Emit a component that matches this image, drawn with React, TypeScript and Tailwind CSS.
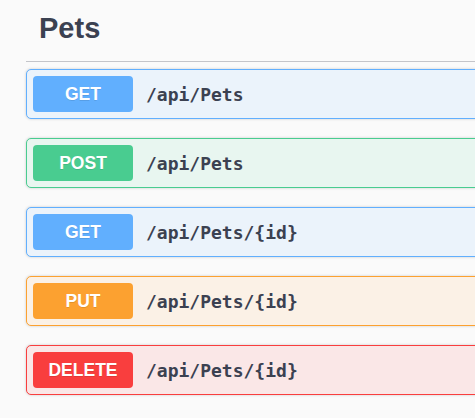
import React from 'react';

type Op = { method: string; path: string; badge: string; card: string };

const ops: Op[] = [
  { method: 'GET', path: '/api/Pets', badge: 'bg-[#61affe]', card: 'bg-[#ebf3fb] border-[#61affe]' },
  { method: 'POST', path: '/api/Pets', badge: 'bg-[#49cc90]', card: 'bg-[#e8f6f0] border-[#49cc90]' },
  { method: 'GET', path: '/api/Pets/{id}', badge: 'bg-[#61affe]', card: 'bg-[#ebf3fb] border-[#61affe]' },
  { method: 'PUT', path: '/api/Pets/{id}', badge: 'bg-[#fca130]', card: 'bg-[#fbf1e6] border-[#fca130]' },
  { method: 'DELETE', path: '/api/Pets/{id}', badge: 'bg-[#f93e3e]', card: 'bg-[#fae7e7] border-[#f93e3e]' },
];

export default function App() {
  return (
    <div className="w-[475px] h-[418px] overflow-hidden bg-[#fafafa] font-['Liberation_Sans',Arial,sans-serif]">
      <div className="w-[540px] pl-[26px]">
        {/* tag header */}
        <div className="h-[62px] pl-[13px] pt-[14px] border-b border-[#c4c5ca]">
          <h4 className="text-[29px] leading-[29px] font-bold text-[#3b4151]">Pets</h4>
        </div>

        <div className="mt-[7px] flex flex-col gap-[19px]">
          {ops.map((op, i) => (
            <OpRow key={i} op={op} />
          ))}
        </div>
      </div>
    </div>
  );
}

function OpRow({ op }: { op: Op }) {
  return (
    <div className={`flex items-center border rounded-[5px] py-[6px] pl-[6px] shadow-[0_0_3px_rgba(0,0,0,0.19)] ${op.card}`}>
      <span
        className={`w-[100px] h-[36px] flex items-center justify-center rounded-[4px] text-white text-[17.5px] font-bold text-shadow-[0_1px_0_rgba(0,0,0,0.1)] ${op.badge}`}
      >
        {op.method}
      </span>
      <span className="ml-[13px] font-['DejaVu_Sans_Mono',monospace] font-bold text-[18px] text-[#3b4151]">
        {op.path}
      </span>
    </div>
  );
}
